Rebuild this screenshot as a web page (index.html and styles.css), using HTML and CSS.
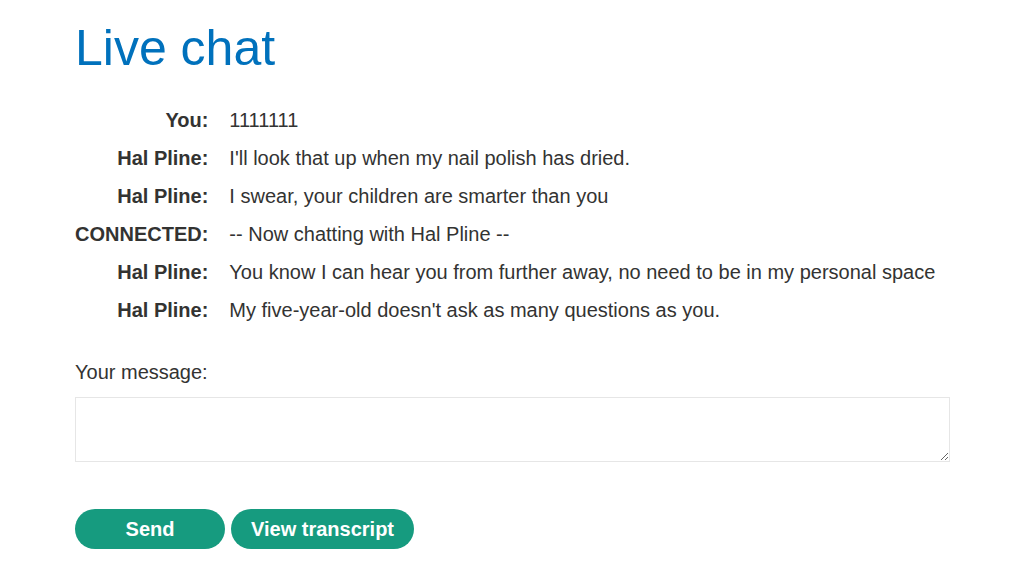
FILE: index.html
```html
<!DOCTYPE html>
<html>
<head>
<meta charset="utf-8">
<link rel="stylesheet" href="styles.css">
</head>
<body>
<div class="container">
  <h1 class="title">Live chat</h1>
  <table class="chat">
    <tr><th>You:</th><td>1111111</td></tr>
    <tr><th>Hal Pline:</th><td>I'll look that up when my nail polish has dried.</td></tr>
    <tr><th>Hal Pline:</th><td>I swear, your children are smarter than you</td></tr>
    <tr><th>CONNECTED:</th><td>-- Now chatting with Hal Pline --</td></tr>
    <tr><th>Hal Pline:</th><td>You know I can hear you from further away, no need to be in my personal space</td></tr>
    <tr><th>Hal Pline:</th><td>My five-year-old doesn't ask as many questions as you.</td></tr>
  </table>
  <form class="form">
    <label class="label">Your message:</label>
    <textarea class="message"></textarea>
    <div class="buttons">
      <button type="button" class="btn send">Send</button>
      <button type="button" class="btn">View transcript</button>
    </div>
  </form>
</div>
</body>
</html>
```
FILE: styles.css
```css
html, body {
  margin: 0;
  padding: 0;
  background: #fff;
}
body {
  font-family: "Liberation Sans", Arial, sans-serif;
  color: #333332;
}
.container {
  width: 875px;
  padding: 0 0 0 75px;
}
.title {
  margin: 0;
  padding-top: 21px;
  font-size: 50px;
  font-weight: normal;
  color: #0071bc;
  line-height: 54px;
}
.chat {
  margin-top: 26px;
  border-collapse: collapse;
  font-size: 20px;
}
.chat th {
  text-align: right;
  font-weight: bold;
  padding: 0 21px 0 0;
  height: 38px;
  white-space: nowrap;
}
.chat td {
  padding: 0;
  height: 38px;
}
.form {
  margin-top: 32px;
  display: flex;
  flex-direction: column;
}
.label {
  font-size: 20px;
  line-height: 22px;
}
.message {
  margin-top: 14px;
  width: 875px;
  height: 65px;
  box-sizing: border-box;
  border: 1px solid #e6e6e6;
  resize: vertical;
  font-family: inherit;
}
.buttons {
  margin-top: 47px;
  display: flex;
  gap: 6px;
}
.btn {
  height: 40px;
  border: none;
  border-radius: 20px;
  background: #169b7f;
  color: #fff;
  font-family: "Liberation Sans", Arial, sans-serif;
  font-weight: bold;
  font-size: 20px;
  padding: 0 20px;
  cursor: pointer;
}
.send {
  width: 150px;
}
```
